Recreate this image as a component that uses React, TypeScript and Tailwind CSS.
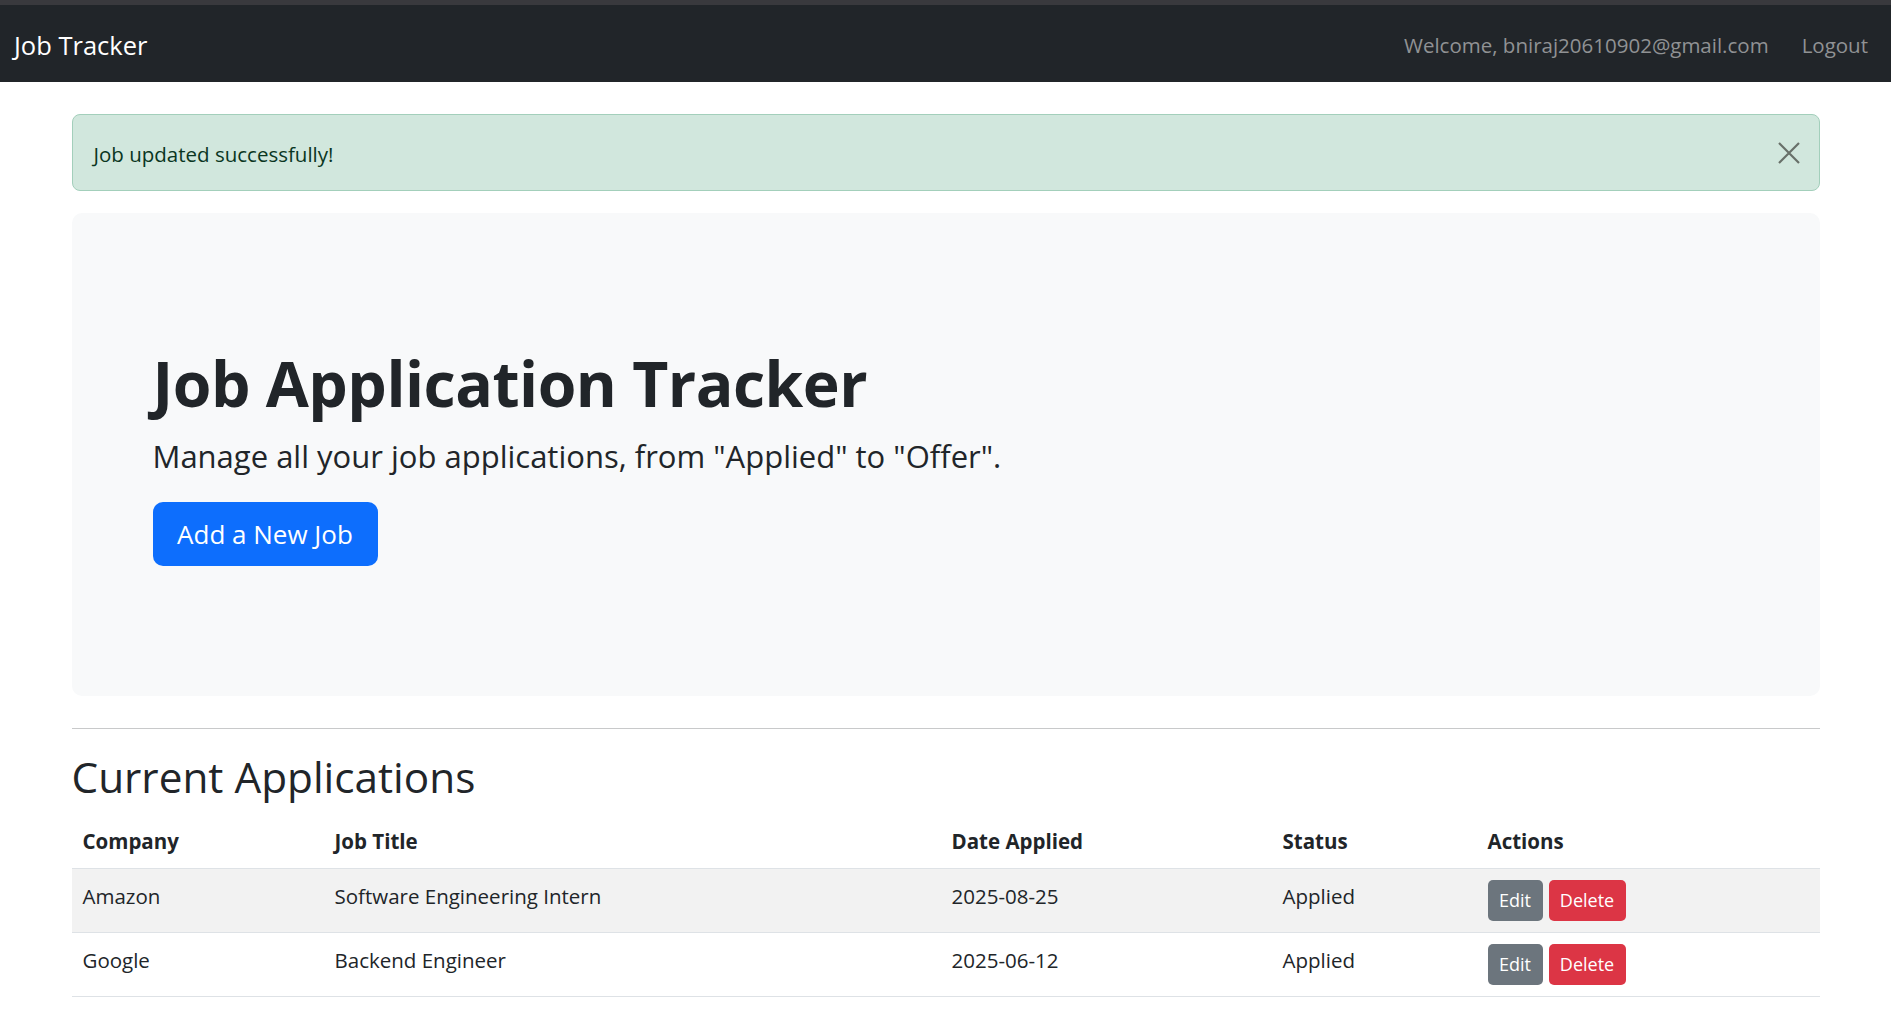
import React from "react";

interface JobRow {
  company: string;
  title: string;
  date: string;
  status: string;
}

const jobs: JobRow[] = [
  { company: "Amazon", title: "Software Engineering Intern", date: "2025-08-25", status: "Applied" },
  { company: "Google", title: "Backend Engineer", date: "2025-06-12", status: "Applied" },
];

const App: React.FC = () => {
  return (
    <div className="min-h-screen bg-white font-['Open_Sans',sans-serif] text-[#212529]">
      <div className="h-[5px] bg-[#39393d]" />
      <nav className="flex h-[77px] items-center justify-between bg-[#212529] pl-[14px] pr-[23px] pt-[3px]">
        <span className="text-[25.5px] text-white">Job Tracker</span>
        <div className="flex items-center text-[20.5px] text-[#909294]">
          <span>Welcome, bniraj20610902@gmail.com</span>
          <a href="#" className="ml-[33px]">
            Logout
          </a>
        </div>
      </nav>

      <main className="mx-auto w-[1748px] pt-[32px]">
        <div className="flex h-[77px] items-center justify-between rounded-[8px] border border-[#a3cfbb] bg-[#d1e7dd] pl-[21px] pr-[18px] pt-[3px] text-[20.5px] text-[#0a3622]">
          <span>Job updated successfully!</span>
          <button className="-mt-[3px] flex h-[24px] w-[24px] items-center justify-center text-[#687069]">
            <svg width="22" height="22" viewBox="0 0 22 22" fill="none" stroke="currentColor" strokeWidth="2.2">
              <path d="M1 1L21 21M21 1L1 21" />
            </svg>
          </button>
        </div>

        <div className="mt-[22px] rounded-[10px] bg-[#f8f9fa] p-[65px]">
          <div className="px-[16px] py-[65px]">
            <h1 className="mb-[11px] pt-[1px] text-[62.5px] font-bold leading-[77px] tracking-[-0.5px]">
              Job Application Tracker
            </h1>
            <p className="mb-[22px] text-[31px] leading-[48px]">
              Manage all your job applications, from "Applied" to "Offer".
            </p>
            <button className="h-[64px] w-[225px] rounded-[10px] bg-[#0d6efd] text-[26px] text-white">
              Add a New Job
            </button>
          </div>
        </div>

        <hr className="mt-[32px] mb-[22px] border-t border-[#c8c9ca]" />

        <h2 className="mb-[11px] text-[42.3px] font-medium leading-[52px]">Current Applications</h2>

        <table className="w-full border-collapse text-left align-top text-[20.5px]">
          <thead>
            <tr className="border-b border-[#dee2e6]">
              <th className="w-[252px] px-[11px] py-[11px] align-top font-bold leading-[32px]">Company</th>
              <th className="w-[617px] px-[11px] py-[11px] align-top font-bold leading-[32px]">Job Title</th>
              <th className="w-[331px] px-[11px] py-[11px] align-top font-bold leading-[32px]">Date Applied</th>
              <th className="w-[205px] px-[11px] py-[11px] align-top font-bold leading-[32px]">Status</th>
              <th className="px-[11px] py-[11px] align-top font-bold leading-[32px]">Actions</th>
            </tr>
          </thead>
          <tbody>
            {jobs.map((job, index) => (
              <tr
                key={index}
                className={
                  index % 2 === 0
                    ? "border-b border-[#dee2e6] bg-[#f2f2f2]"
                    : "border-b border-[#dee2e6]"
                }
              >
                <td className="px-[11px] py-[11px] align-top leading-[32px]">{job.company}</td>
                <td className="px-[11px] py-[11px] align-top leading-[32px]">{job.title}</td>
                <td className="px-[11px] py-[11px] align-top leading-[32px]">{job.date}</td>
                <td className="px-[11px] py-[11px] align-top leading-[32px]">{job.status}</td>
                <td className="px-[11px] py-[11px] align-top">
                  <div className="flex gap-[6px]">
                    <button className="h-[41px] w-[55px] rounded-[5px] bg-[#6c757d] text-[18px] text-white">
                      Edit
                    </button>
                    <button className="h-[41px] w-[77px] rounded-[5px] bg-[#dc3545] text-[18px] text-white">
                      Delete
                    </button>
                  </div>
                </td>
              </tr>
            ))}
          </tbody>
        </table>
      </main>
    </div>
  );
};

export default App;
